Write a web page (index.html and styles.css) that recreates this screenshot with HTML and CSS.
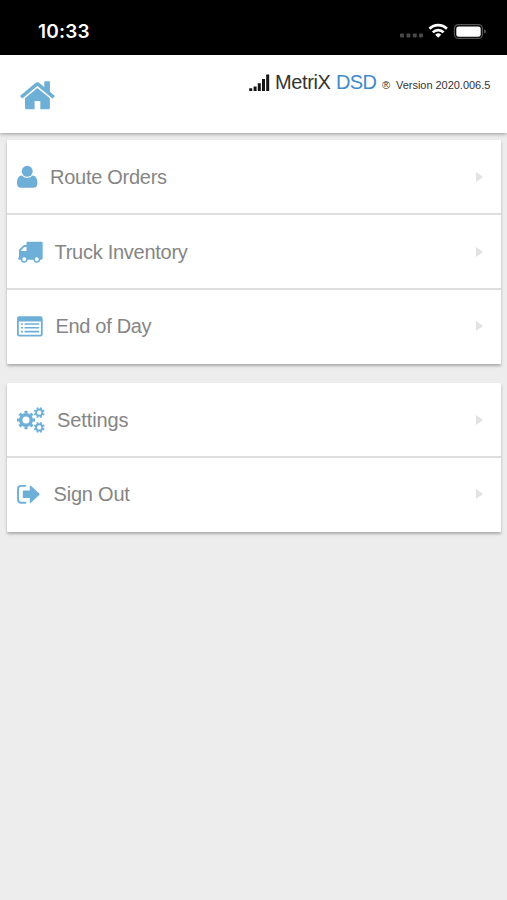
FILE: index.html
```html
<!DOCTYPE html>
<html lang="en">
<head>
<meta charset="utf-8">
<title>MetriX DSD</title>
<link rel="stylesheet" href="styles.css">
</head>
<body>
<div class="status">
  <span class="time">10:33</span>
  <svg class="indicators" width="87" height="18" viewBox="0 0 87 18">
    <g fill="#484848"><rect x="0" y="11.5" width="4" height="4" rx="1"/><rect x="6.4" y="11.5" width="4" height="4" rx="1"/><rect x="12.8" y="11.5" width="4" height="4" rx="1"/><rect x="19" y="11.5" width="4" height="4" rx="1"/></g>
    <g fill="none" stroke="#fff" stroke-width="2.7"><path d="M29.5 6.8a12.2 12.2 0 0 1 17.4 0"/><path d="M32.8 10.4a7.700 7.700 0 0 1 10.800 0"/></g>
    <path d="M35.200 12.700a4.400 4.400 0 0 1 6 0l-3 3.100z" fill="#fff"/>
    <rect x="54.400" y="2.600" width="28" height="13.800" rx="4" fill="none" stroke="#555" stroke-width="1.200"/>
    <rect x="56.300" y="4.500" width="24.400" height="10.200" rx="2.200" fill="#fff"/>
    <path d="M84 7.200q2 .7 2 2.300t-2 2.300z" fill="#555"/>
  </svg>
</div>
<header class="header">
  <svg class="home" width="36" height="32" viewBox="0 0 36 32" fill="#6eafd7">
    <path d="M5 18.300 17.400 8 29.900 18.300V27.800a1.500 1.500 0 0 1-1.500 1.500H20.300V21h-5.700v8.300H6.500A1.500 1.500 0 0 1 5 27.800z"/>
    <path d="M.4 16.600a.8.800 0 0 1 .1-1.100L15.100 3.200a3.500 3.500 0 0 1 4.600 0l4.600 3.900V1.900q0-.7.700-.7h4.200q.7 0 .7.700v9.900l4.500 3.700a.8.800 0 0 1 .1 1.100l-1.300 1.500a.8.800 0 0 1-1.100.1L17.400 6 2.900 18.100a.8.800 0 0 1-1.100-.1z"/>
  </svg>
  <div class="brand">
    <svg class="bars" width="21" height="18" viewBox="0 0 21 18" fill="#151515"><path d="M.2 14.200h3V17h-3zM4.600 12.500h3V17h-3zM8.800 9.200h3V17h-3zM13 5h3v12h-3zM17.200.6h3V17h-3z"/></svg>
    <span class="name">MetriX</span><span class="dsd">DSD</span><span class="reg">®</span><span class="version">Version 2020.006.5</span>
  </div>
</header>
<main class="menu">
  <section class="card">
    <div class="row">
      <svg width="21" height="28" viewBox="0 0 21 28"><path d="M4.800 12.600A7.500 7.500 0 0 0 10.200 14.900a7.500 7.500 0 0 0 5.400-2.300c3.700.2 4.800 3.800 4.800 7.800 0 2.600-1.500 4.300-3.800 4.300H3.800C1.500 24.700 0 23 0 20.400c0-4 1.100-7.600 4.800-7.800z"/><circle cx="10.200" cy="8.300" r="5.500"/></svg>
      <span class="label route">Route Orders</span><i class="arrow"></i>
    </div>
    <div class="row">
      <svg class="truck" width="25" height="28" viewBox="0 0 25 28"><path fill-rule="evenodd" d="M8.500 7V5q0-1.200 1.200-1.200h13.800q1.200 0 1.200 1.200v15.500q0 1.300-2.300 1.300H1.500Q0 21.800 0 20.500q0-.8 1-.9v-7q0-.8.700-1.500l3.100-3.200Q5.600 7 6.800 7zM2.800 13h5.700V9H6.800q-.5 0-.8.300L3 12.400z"/><circle class="wheel" cx="6.200" cy="21.200" r="2.700"/><circle class="wheel" cx="18.800" cy="21.200" r="2.700"/></svg>
      <span class="label inventory">Truck Inventory</span><i class="arrow"></i>
    </div>
    <div class="row">
      <svg width="27" height="28" viewBox="0 0 27 28"><path fill-rule="evenodd" d="M2.300 4.200h21.100q2.300 0 2.300 2.300v15.800q0 2.300-2.300 2.300H2.300Q0 24.600 0 22.300V6.500q0-2.300 2.300-2.300zM1.800 9.500V22q0 .8.800.8h20.500q.8 0 .8-.8V9.500z"/><path d="M4 11.200h2v1.600H4zM7.500 11.200h14.700v1.600H7.500zM4 15h2v1.600H4zM7.500 15h14.700v1.600H7.500zM4 18.800h2v1.600H4zM7.500 18.800h14.700v1.600H7.500z"/></svg>
      <span class="label day">End of Day</span><i class="arrow"></i>
    </div>
  </section>
  <section class="card">
    <div class="row">
      <svg width="28" height="28" viewBox="0 0 28 28"><g class="gear"><circle cx="9" cy="14" r="5.300" stroke-width="3.500"/><circle cx="9" cy="14" r="7.900" stroke-width="2.500" pathLength="16" stroke-dasharray="1 1" stroke-dashoffset=".5"/><circle cx="22.200" cy="6.600" r="3.150" stroke-width="1.900"/><circle cx="22.200" cy="6.600" r="4.600" stroke-width="1.700" pathLength="16" stroke-dasharray="1 1" stroke-dashoffset="1.500"/><circle cx="22.200" cy="21.400" r="3.150" stroke-width="1.900"/><circle cx="22.200" cy="21.400" r="4.600" stroke-width="1.700" pathLength="16" stroke-dasharray="1 1" stroke-dashoffset="1.500"/></g></svg>
      <span class="label settings">Settings</span><i class="arrow"></i>
    </div>
    <div class="row">
      <svg width="24" height="28" viewBox="0 0 24 28"><path d="M8.400 5.900H4.200Q1 5.900 1 9.100v10.400q0 3.200 3.200 3.200h4.200" fill="none" stroke="#6eafd7" stroke-width="1.900" stroke-linecap="round"/><path d="M6.600 10.500h6.200V6.300q0-1.400 1.100-.5l8.400 7.700q.8.800 0 1.600l-8.400 7.700q-1.100.9-1.100-.5v-4.200H6.600q-.8 0-.8-.8v-6q0-.8.800-.8z"/></svg>
      <span class="label signout">Sign Out</span><i class="arrow"></i>
    </div>
  </section>
</main>
</body>
</html>
```
FILE: styles.css
```css
* { box-sizing: border-box; }
body { margin: 0; min-height: 900px; background: #ededed; font-family: "Liberation Sans", Arial, sans-serif; }
.status { height: 54.500px; background: #000; color: #fff; display: flex; justify-content: space-between; padding: 20px 20px 0 38px; }
.time { font: 600 19px/23px Inter, sans-serif; letter-spacing: .2px; }
.indicators { margin-top: 2px; }
.header { height: 78.500px; background: #fff; display: flex; justify-content: space-between; padding: 0 17px 0 20px; box-shadow: 0 1px 4px rgba(0,0,0,.35); }
.home { margin-top: 25.500px; }
.brand { display: flex; align-items: baseline; height: 30px; margin-top: 16px; color: #333; white-space: nowrap; }
.bars { align-self: flex-start; margin-top: 3px; margin-right: 5px; }
.name, .dsd { font-size: 20px; }
.name { width: 61px; letter-spacing: -.4px; }
.dsd { width: 46px; color: #428bca; letter-spacing: -.7px; }
.reg { width: 14px; font-size: 11px; }
.version { font-size: 11px; width: 94px; letter-spacing: -.03px; }
.menu { padding: 7px 6px 0 7px; }
.card { background: #fff; margin-bottom: 19px; border-radius: 1px; box-shadow: 0 2px 3px rgba(0,0,0,.28); }
.row { height: 75px; display: flex; align-items: center; padding: 0 18px 0 10px; border-bottom: 2px solid #dedede; color: #858585; }
.row:last-child { height: 74px; border-bottom-color: transparent; }
.row svg { fill: #6eafd7; flex: none; }
.row .truck { margin-left: 1px; }
.wheel { fill: #fff; stroke: #6eafd7; stroke-width: 1.500px; }
.gear { fill: none; stroke: #6eafd7; }
.label { font-size: 20px; line-height: 24px; margin-left: 12px; white-space: nowrap; letter-spacing: -.27px; }
.inventory, .day { margin-left: 11.500px; }
.day { letter-spacing: -.32px; }
.settings { letter-spacing: -.1px; }
.signout { letter-spacing: -.2px; margin-left: 12.500px; }
.arrow { margin-left: auto; border-left: 7px solid #e2e2e2; border-top: 5px solid transparent; border-bottom: 5px solid transparent; }
```
